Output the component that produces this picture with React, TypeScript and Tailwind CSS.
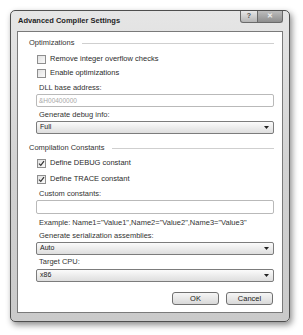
import React from 'react';

const font = { fontFamily: '"Liberation Sans", Arial, sans-serif' };

function GroupHeader({ title }: { title: string }) {
    return (
        <div className="flex items-center h-[12px] pl-[11px] pr-[8px]">
            <span className="text-[7.5px] text-[#333] whitespace-nowrap">{title}</span>
            <span className="flex-1 h-px bg-[#cfcfcf] ml-[8px]" />
        </div>
    );
}

function Check({ label, checked }: { label: string; checked?: boolean }) {
    return (
        <div className="flex items-center h-[14px] pl-[19px]">
            <span className="w-[9px] h-[9px] border border-[#8e8e8e] bg-gradient-to-br from-[#e2e2e2] to-[#fafafa] flex items-center justify-center">
                {checked && (
                    <svg width="7" height="7" viewBox="0 0 7 7">
                        <path d="M1 3.6 L2.8 5.4 L6 1.2" stroke="#333" strokeWidth="1.2" fill="none" />
                    </svg>
                )}
            </span>
            <span className="ml-[4px] text-[7.5px] text-[#2b2b2b] whitespace-nowrap">{label}</span>
        </div>
    );
}

function Label({ text, className = '' }: { text: string; className?: string }) {
    return (
        <div className={`h-[12px] flex items-center pl-[21px] text-[7.5px] text-[#333] whitespace-nowrap ${className}`}>
            {text}
        </div>
    );
}

function TextBox({ value, h = 'h-[13px]' }: { value?: string; h?: string }) {
    return (
        <div className={`mx-[18px] mr-[8px] ${h} border border-[#b9b9b9] rounded-[2px] bg-white flex items-center px-[2px] text-[6.5px] text-[#a8a8a8]`}>
            {value}
        </div>
    );
}

function Select({ value, className = '' }: { value: string; className?: string }) {
    return (
        <div className={`ml-[18px] mr-[8px] h-[13px] border border-[#7c7c7c] rounded-[2px] bg-gradient-to-b from-[#fbfbfb] to-[#dedede] flex items-center justify-between pl-[3px] pr-[4px] ${className}`}>
            <span className="text-[7px] text-[#222]">{value}</span>
            <svg width="5" height="3" viewBox="0 0 5 3">
                <path d="M0 0 H5 L2.5 3 Z" fill="#222" />
            </svg>
        </div>
    );
}

function Button({ text }: { text: string }) {
    return (
        <div className="w-[47px] h-[13px] border border-[#707070] rounded-[3px] bg-gradient-to-b from-[#f6f6f6] to-[#d9d9d9] flex items-center justify-center text-[7.5px] text-[#222]">
            {text}
        </div>
    );
}

export default function App() {
    return (
        <div className="w-[303px] h-[335px] bg-white pt-[10px] pl-[10px]" style={font}>
            <div className="w-[280px] h-[312px] rounded-[5px] border border-[#4f4f4f] bg-gradient-to-b from-[#e6e6e6] via-[#d2d2d2] to-[#cacaca] shadow-[2px_3px_6px_rgba(0,0,0,0.45)] flex flex-col">
                <div className="h-[20px] flex justify-between">
                    <span className="pl-[7px] pt-[4px] text-[7.5px] font-bold text-[#1e1e1e] whitespace-nowrap">
                        Advanced Compiler Settings
                    </span>
                    <div className="flex mr-[6px] h-[12px]">
                        <div className="w-[18px] h-full border border-[#6a6a6a] border-t-0 rounded-bl-[3px] bg-gradient-to-b from-[#e8e8e8] to-[#b5b5b5] flex items-center justify-center text-[7px] font-bold text-[#555]">
                            ?
                        </div>
                        <div className="w-[25px] h-full border border-[#6a6a6a] border-t-0 border-l-0 rounded-br-[3px] bg-gradient-to-b from-[#bdbdbd] to-[#8e8e8e] flex items-center justify-center text-[7px] font-bold text-[#eee]">
                            ✕
                        </div>
                    </div>
                </div>
                <div className="mx-[6px] mb-[8px] flex-1 border border-[#7a7a7a] bg-white flex flex-col">
                    <div className="h-[5px]" />
                    <GroupHeader title="Optimizations" />
                    <div className="h-[3px]" />
                    <Check label="Remove integer overflow checks" />
                    <Check label="Enable optimizations" />
                    <Label text="DLL base address:" className="mt-[2px]" />
                    <TextBox value="&H00400000" />
                    <Label text="Generate debug info:" className="mt-[2px]" />
                    <Select value="Full" />
                    <div className="h-[8px]" />
                    <GroupHeader title="Compilation Constants" />
                    <div className="h-[2px]" />
                    <Check label="Define DEBUG constant" checked />
                    <div className="h-[2px]" />
                    <Check label="Define TRACE constant" checked />
                    <Label text="Custom constants:" className="mt-[2px]" />
                    <TextBox h="h-[14px]" />
                    <Label
                        text={'Example: Name1="Value1",Name2="Value2",Name3="Value3"'}
                        className="mt-[3px] pl-[18px]"
                    />
                    <Label text="Generate serialization assemblies:" className="mt-[1px]" />
                    <Select value="Auto" />
                    <Label text="Target CPU:" className="mt-[1px]" />
                    <Select value="x86" className="mt-[1px]" />
                    <div className="flex justify-end gap-[7px] mt-[10px] mr-[9px]">
                        <Button text="OK" />
                        <Button text="Cancel" />
                    </div>
                </div>
            </div>
        </div>
    );
}
